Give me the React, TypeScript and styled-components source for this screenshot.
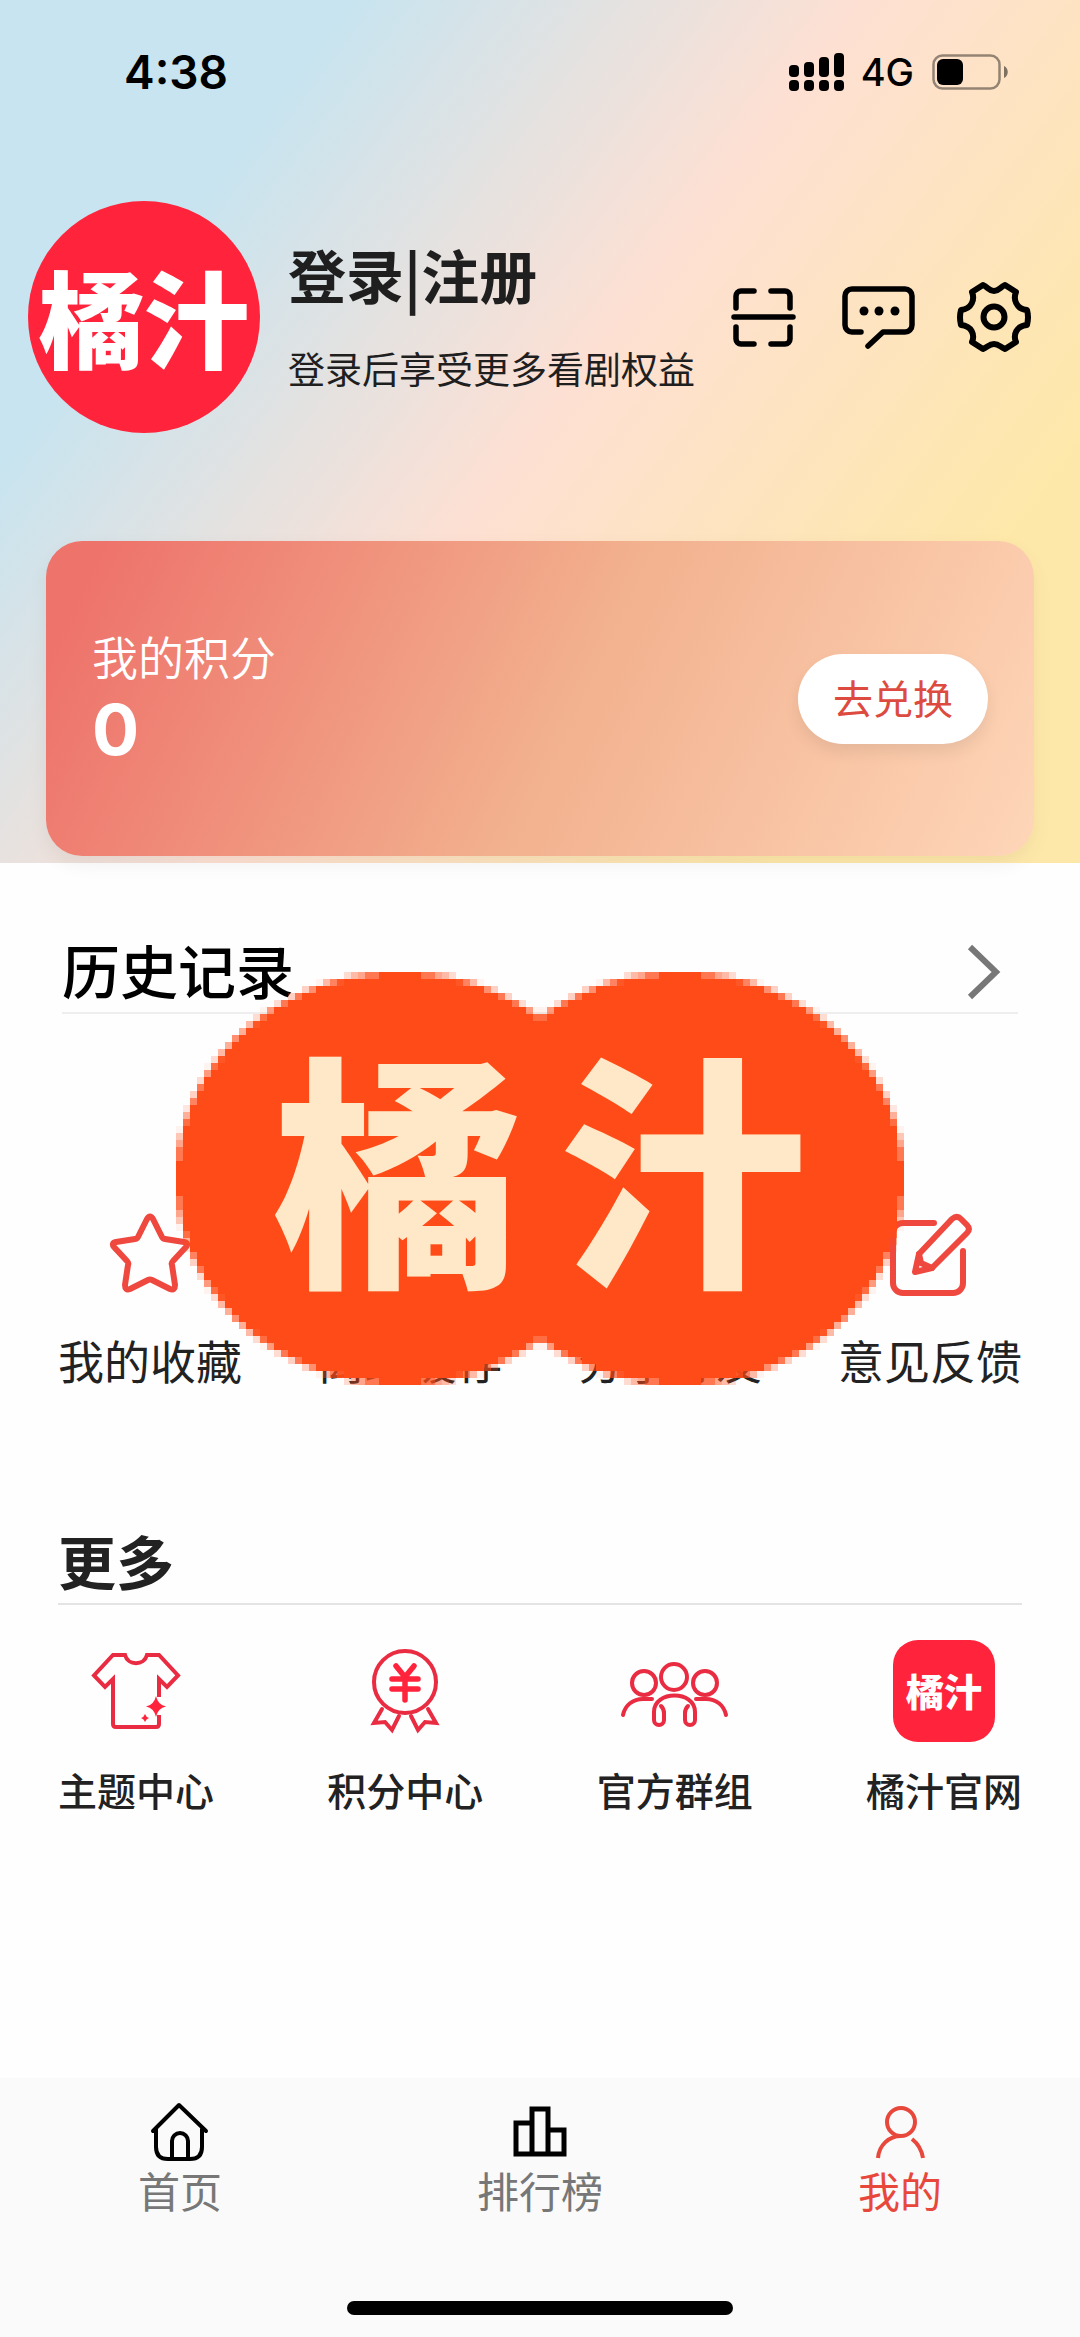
import React from "react";
import styled, { createGlobalStyle } from "styled-components";

const cjk = `"Noto Sans CJK SC", "Noto Sans", sans-serif`;
const latin = `Inter, "Noto Sans CJK SC", sans-serif`;

const GlobalStyle = createGlobalStyle`
  * { box-sizing: border-box; }
  body { margin: 0; background: #fefefe; font-family: ${cjk}; }
  h1, h2, p { margin: 0; }
  button { border: 0; padding: 0; background: none; font: inherit; color: inherit; cursor: pointer; }
  a { color: inherit; text-decoration: none; }
  svg { display: block; overflow: visible; flex: none; }
`;

const Page = styled.div`
  min-height: 100vh;
  display: flex;
  flex-direction: column;
`;

const Header = styled.header`
  padding-bottom: 7px;
  background: linear-gradient(127deg, #c7e4f0 20%, #fee0d3 50%, #fee8a9 82%);
`;

const StatusBar = styled.div`
  height: 144px;
  padding: 0 72px 0 124px;
  display: flex;
  align-items: center;
  justify-content: space-between;
  font-family: ${latin};
  color: #000;
`;

const Clock = styled.time`
  font-size: 46px;
  font-weight: 600;
`;

const StatusIcons = styled.div`
  display: flex;
  align-items: center;
  gap: 18px;
  font-size: 38px;
  font-weight: 500;
`;

const Profile = styled.section`
  padding: 57px 48px 0 28px;
  display: flex;
  align-items: center;
`;

const Avatar = styled.div`
  width: 232px;
  height: 232px;
  padding-bottom: 6px;
  flex: none;
  display: flex;
  align-items: center;
  justify-content: center;
  border-radius: 50%;
  background: #ff233b;
  color: #fff;
  font-size: 105px;
  font-weight: 900;
  line-height: 1;
`;

const Account = styled.div`
  flex: 1;
  margin-left: 28px;
  padding-bottom: 6px;
  display: flex;
  flex-direction: column;
  align-items: flex-start;
  gap: 36px;
  color: #1f1f1f;
  white-space: nowrap;
`;

const LoginLink = styled.a`
  font-size: 58px;
  line-height: 72px;
  font-weight: 700;
`;

const Hint = styled.p`
  font-size: 37px;
  line-height: 44px;
`;

const Tools = styled.div`
  display: flex;
  gap: 40px;
`;

const PointsCard = styled.section`
  height: 315px;
  margin: 108px 46px 0;
  padding: 0 46px;
  display: flex;
  align-items: center;
  justify-content: space-between;
  border-radius: 36px;
  background: linear-gradient(115deg, #ee736b 5%, #f2b08e 52%, #fed6b8 100%);
  box-shadow: 0 8px 20px rgba(0, 0, 0, 0.06);
  color: #fff;
`;

const PointsLabel = styled.p`
  margin-bottom: 2px;
  font-size: 46px;
  line-height: 60px;
  font-weight: 350;
`;

const PointsValue = styled.p`
  font-family: ${latin};
  font-size: 70px;
  line-height: 86px;
  font-weight: 700;
`;

const RedeemButton = styled.button`
  width: 190px;
  height: 90px;
  padding-bottom: 4px;
  border-radius: 45px;
  background: #fff;
  box-shadow: 0 8px 16px rgba(0, 0, 0, 0.08);
  color: #dd4b40;
  font-size: 40px;
`;

const Main = styled.main`
  flex: 1;
  position: relative;
  padding: 69px 58px 40px;
`;

const HistoryLink = styled.a`
  display: flex;
  align-items: center;
  justify-content: space-between;
  margin: 0 4px;
  padding-right: 16px;
  border-bottom: 2px solid #eee;
`;

const Heading = styled.h2<{ $dark?: boolean }>`
  padding-bottom: 6px;
  font-size: 58px;
  line-height: 74px;
  font-weight: ${(p) => (p.$dark ? 500 : 700)};
  color: ${(p) => (p.$dark ? "#000" : "#222")};
`;

const MoreHeading = styled.div`
  margin-top: 134px;
  border-bottom: 2px solid #e4e4e4;
`;

const Row = styled.div<{ $top: number }>`
  margin-top: ${(p) => p.$top}px;
  display: flex;
  justify-content: space-between;
`;

const QuickItem = styled.button`
  display: flex;
  flex-direction: column;
  align-items: center;
  gap: 34px;
  font-size: 46px;
  line-height: 60px;
  color: #222;
`;

const MoreItem = styled.button`
  display: flex;
  flex-direction: column;
  align-items: center;
  gap: 20px;
  font-size: 39px;
  line-height: 54px;
  font-weight: 500;
  color: #222;
`;

const Tile = styled.span`
  width: 102px;
  height: 102px;
  padding-bottom: 2px;
  display: flex;
  align-items: center;
  justify-content: center;
  border-radius: 25px;
  background: #ff233b;
  color: #fff;
  font-size: 38px;
  font-weight: 900;
  line-height: 1;
`;

const Watermark = styled.div`
  position: absolute;
  top: 109px;
  left: 50%;
  width: 728px;
  height: 413px;
  transform: translateX(-50%);
  pointer-events: none;
`;

const WatermarkText = styled.div`
  position: absolute;
  inset: 0;
  padding-bottom: 38px;
  display: flex;
  align-items: center;
  justify-content: center;
  gap: 40px;
  color: #ffe8c8;
  font-size: 246px;
  font-weight: 900;
  line-height: 1;
`;

const TabBar = styled.nav`
  padding: 24px 0 22px;
  display: flex;
  flex-direction: column;
  align-items: center;
  background: #fafafa;
`;

const Tabs = styled.div`
  width: 100%;
  display: grid;
  grid-template-columns: repeat(3, 1fr);
`;

const Tab = styled.a<{ $active?: boolean }>`
  display: flex;
  flex-direction: column;
  align-items: center;
  font-size: 42px;
  line-height: 56px;
  color: ${(p) => (p.$active ? "#e8483c" : "#777")};
`;

const HomeIndicator = styled.div`
  width: 386px;
  height: 14px;
  margin-top: 83px;
  border-radius: 7px;
  background: #000;
`;

type IconProps = { size: number; width: number; color?: string; children: React.ReactNode };

const Icon = ({ size, width, color = "#000", children }: IconProps) => (
  <svg
    width={size}
    height={size}
    viewBox={`0 0 ${size} ${size}`}
    fill="none"
    stroke={color}
    strokeWidth={width}
    strokeLinecap="round"
    strokeLinejoin="round"
    aria-hidden="true"
  >
    {children}
  </svg>
);

const Signal = () => (
  <svg width="54" height="40" viewBox="0 0 54 40" aria-hidden="true">
    {[12, 15, 20, 24].map((h, i) => (
      <g key={h}>
        <rect x={i * 15} y={25 - h} width="10" height={h} rx="4" />
        <rect x={i * 15} y="28" width="10" height="11" rx="4" />
      </g>
    ))}
  </svg>
);

const Battery = () => (
  <svg width="76" height="36" viewBox="0 0 76 36" aria-hidden="true">
    <rect x="1.5" y="1.5" width="66" height="33" rx="9" fill="none" stroke="#000" strokeOpacity="0.42" strokeWidth="2.5" />
    <rect x="5" y="5" width="26" height="26" rx="6" />
    <path d="M72 12c5 2 5 10 0 12z" fillOpacity="0.5" />
  </svg>
);

/* Two overlapping discs on a coarse cell grid, with softened edge cells. */
const CELL = 7;
const COLS = 104;
const ROWS = 59;

const inside = (x: number, y: number) =>
  [32, 72].some((cx) => ((x - cx) / 32) ** 2 + ((y - 29.5) / 29.5) ** 2 <= 1);

const coverage = (col: number, row: number) => {
  let hits = 0;
  for (let a = 0; a < 4; a++)
    for (let b = 0; b < 4; b++)
      if (inside(col + (a + 0.5) / 4, row + (b + 0.5) / 4)) hits++;
  return hits / 16;
};

const discCells = () => {
  const out: React.ReactNode[] = [];
  for (let row = 0; row < ROWS; row++) {
    let col = 0;
    while (col < COLS) {
      const c = coverage(col, row);
      let end = col + 1;
      while (end < COLS && coverage(end, row) === c) end++;
      if (c > 0)
        out.push(
          <rect
            key={`${row}-${col}`}
            x={col * CELL}
            y={row * CELL}
            width={(end - col) * CELL}
            height={CELL}
            fillOpacity={c}
          />
        );
      col = end;
    }
  }
  return out;
};

const Discs = () => (
  <svg width="728" height="413" viewBox="0 0 728 413" fill="#ff4b17" shapeRendering="crispEdges" aria-hidden="true">
    {discCells()}
  </svg>
);

const RED = "#ee483f";
const CRIMSON = "#e92c42";

const quick = [
  {
    label: "我的收藏",
    icon: (
      <path d="M39 8Q42 3 45 8L54 26Q55 28 57 28L76 31Q81 32 78 36L65 50Q63 52 64 54L67 74Q67 80 62 78L44 69Q42 68 40 69L22 78Q17 80 17 74L20 54Q21 52 19 50L6 36Q3 32 8 31L27 28Q29 28 30 26Z" />
    ),
  },
  { label: "离线缓存", icon: <path d="M42 8v46M22 36l20 20 20-20M8 76h68" /> },
  {
    label: "分享好友",
    icon: (
      <>
        <circle cx="18" cy="42" r="10" />
        <circle cx="64" cy="18" r="10" />
        <circle cx="64" cy="66" r="10" />
        <path d="M27 37l28-14M27 47l28 14" />
      </>
    ),
  },
  {
    label: "意见反馈",
    icon: (
      <>
        <path d="M46 12H15a10 10 0 0 0-10 10V72a10 10 0 0 0 10 10H65a10 10 0 0 0 10-10V40" />
        <path d="M31 43 L64 8 Q69 4 73 8 L79 14 Q83 18 79 22 L44 57 L27 61 Z" />
        <path d="M31 43 L33 52 L44 57" />
      </>
    ),
  },
];

const more = [
  {
    label: "主题中心",
    icon: (
      <Icon size={102} width={4} color={CRIMSON}>
        <g strokeLinejoin="miter" strokeLinecap="butt">
          <path d="M74 57V39L82 47L93 35.500L74 15H62C59 26 43 26 40 15H28L9 35.500L20 47L28 39V84Q28 87 31 87H71Q74 87 74 84V75" />
        </g>
        <path d="M71 56Q73 65 81 66.500Q73 68 71 77Q69 68 61 66.500Q69 65 71 56Z" fill="#ff233b" stroke="none" />
        <path d="M60 74Q61 77 64 78Q61 79 60 82Q59 79 56 78Q59 77 60 74Z" fill="#ff233b" stroke="none" />
      </Icon>
    ),
  },
  {
    label: "积分中心",
    icon: (
      <Icon size={102} width={4} color={CRIMSON}>
        <circle cx="51" cy="42" r="31" />
        <path d="M42 26L51 37L60 26M38 39H64M38 49H64M51 38V60" strokeWidth="5.500" stroke="#ff233b" />
        <g strokeLinejoin="miter">
          <path d="M28 69L20 83L31 82L38 90L45 76" />
          <path d="M74 69L82 83L71 82L64 90L57 76" />
        </g>
      </Icon>
    ),
  },
  {
    label: "官方群组",
    icon: (
      <Icon size={102} width={4} color={CRIMSON}>
        <circle cx="50" cy="37" r="13" />
        <circle cx="20" cy="43" r="12" />
        <circle cx="81" cy="43" r="12" />
        <path d="M-1 75C1 65 9 59 19 59H28" />
        <path d="M102 75C100 65 92 59 82 59H72" />
        <path d="M37 66Q40 69 40 73V80A5 5 0 0 1 30 80V72C30 50 71 50 71 72V80A5 5 0 0 1 61 80V73Q61 69 64 66" />
      </Icon>
    ),
  },
  { label: "橘汁官网", icon: <Tile>橘汁</Tile> },
];

export default function App() {
  return (
    <Page>
      <GlobalStyle />
      <Header>
        <StatusBar>
          <Clock>4:38</Clock>
          <StatusIcons>
            <Signal />
            <span>4G</span>
            <Battery />
          </StatusIcons>
        </StatusBar>
        <Profile>
          <Avatar>橘汁</Avatar>
          <Account>
            <LoginLink href="#login">登录|注册</LoginLink>
            <Hint>登录后享受更多看剧权益</Hint>
          </Account>
          <Tools>
            <button type="button" aria-label="扫一扫">
              <Icon size={76} width={5.5}>
                <path d="M12 29V17a5 5 0 0 1 5-5H30M47 12H61a5 5 0 0 1 5 5V29M66 48V60a5 5 0 0 1-5 5H47M30 65H17a5 5 0 0 1-5-5V48M10 38H69" />
              </Icon>
            </button>
            <button type="button" aria-label="消息">
              <Icon size={76} width={5.5}>
                <path d="M21 53H12a7 7 0 0 1-7-7V17a7 7 0 0 1 7-7H65a7 7 0 0 1 7 7V46a7 7 0 0 1-7 7H43L28 67" />
                <g fill="#000" stroke="none">
                  <circle cx="24" cy="32" r="4.500" />
                  <circle cx="39" cy="32" r="4.500" />
                  <circle cx="55" cy="32" r="4.500" />
                </g>
              </Icon>
            </button>
            <button type="button" aria-label="设置">
              <Icon size={76} width={6}>
                <path d="M27 6C32 8 33 12 38 12S44 8 49 6L60 13C57 20 60 30 71 31Q73 38 71 46C60 47 57 56 60 63L49 70C44 68 43 65 38 65S32 68 27 70L16 63C19 56 16 47 5 46Q3 38 5 31C16 30 19 20 16 13Z" />
                <circle cx="38" cy="38" r="10.500" />
              </Icon>
            </button>
          </Tools>
        </Profile>
        <PointsCard>
          <div>
            <PointsLabel>我的积分</PointsLabel>
            <PointsValue>0</PointsValue>
          </div>
          <RedeemButton type="button">去兑换</RedeemButton>
        </PointsCard>
      </Header>

      <Main>
        <HistoryLink href="#history">
          <Heading $dark>历史记录</Heading>
          <svg width="36" height="56" viewBox="0 0 36 56" fill="none" stroke="#777" strokeWidth="6" aria-hidden="true">
            <path d="M4 3L30 28L4 53" />
          </svg>
        </HistoryLink>
        <Row $top={197}>
          {quick.map((q) => (
            <QuickItem key={q.label} type="button">
              <Icon size={84} width={6} color={RED}>
                {q.icon}
              </Icon>
              {q.label}
            </QuickItem>
          ))}
        </Row>
        <MoreHeading>
          <Heading>更多</Heading>
        </MoreHeading>
        <Row $top={35}>
          {more.map((m) => (
            <MoreItem key={m.label} type="button">
              {m.icon}
              {m.label}
            </MoreItem>
          ))}
        </Row>
        <Watermark>
          <Discs />
          <WatermarkText>
            <span>橘</span>
            <span>汁</span>
          </WatermarkText>
        </Watermark>
      </Main>

      <TabBar>
        <Tabs>
          <Tab href="#home">
            <Icon size={60} width={4}>
              <path d="M3 29L29 3L56 29M6 27V45Q6 57 18 57H40Q52 57 52 45V27M22 57V39a8 8 0 0 1 16 0V57" />
            </Icon>
            首页
          </Tab>
          <Tab href="#rank">
            <Icon size={60} width={5}>
              <path d="M22 21H6V52H54V28H38M22 52V7H38V52" strokeLinejoin="miter" />
            </Icon>
            排行榜
          </Tab>
          <Tab href="#me" $active aria-current="page">
            <Icon size={60} width={4} color="#e8483c">
              <g strokeLinecap="butt">
                <circle cx="31" cy="20" r="14" />
                <path d="M8 56C9 43 19 34 31 34M42 37Q51 44 53 56" />
              </g>
            </Icon>
            我的
          </Tab>
        </Tabs>
        <HomeIndicator />
      </TabBar>
    </Page>
  );
}
